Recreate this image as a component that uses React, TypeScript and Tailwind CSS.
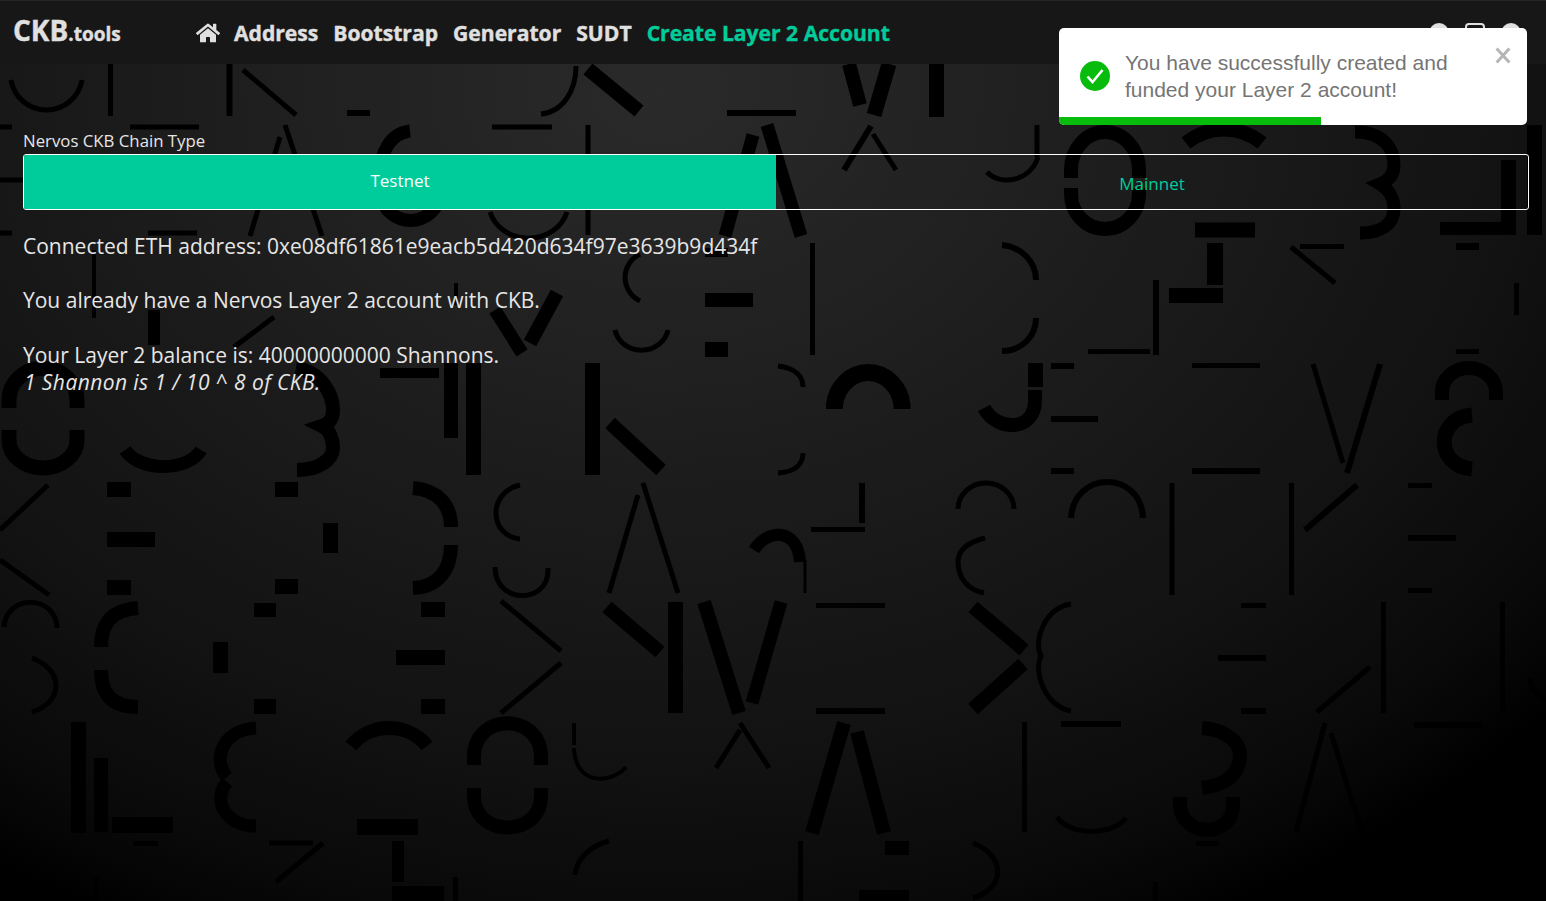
import React from "react";
import { FaHome } from "react-icons/fa";

type L = [number, number, number, number, number];
const lines: L[] = [
  [110.5,64,110.5,116,5],[229.5,64,229.5,116,6],[243,70,296,115,5],[347,113,370,113,6],[0,127,12,127,5],[130,127,199,127,5],
  [285,125,322,236,5],[280,137,250,236,5],[492,127,552,127,5],[0,180,23,180,5],[588,69,639,111,14],[727,113,796,113,6],[588,125,588,235,5],
  [767,125,801,236,13],[753,135,725,236,13],[849,64,860,105,14],[889,64,874,115,15],[936.5,64,936.5,117,15],[871,126,844,170,6],[873,134,896,170,5],
  [1037,125,1037,157,5],[1195,230,1255,230,15],[1440,228.5,1502,228.5,13],[1508.5,160,1508.5,235,15],[1534.5,125,1534.5,235,15],
  [148,233,197,233,5],[0,233,12,233,5],[94,250,94,318,4],[154,310,154,345,12],[274,317,234,347,5],[557,293,530,343,14],[495,310,522,353,13],
  [456,283,456,305,4],[705,300,753,300,14],[705,349.5,728,349.5,15],[705,252.5,728,252.5,9],
  [812.5,243,812.5,355,5],[1215,243,1215,285,16],[1169,295.5,1223,295.5,15],[1156,280,1156,355,6],[1088,351.5,1150,351.5,5],[1300,246.5,1344,246.5,5],[1291,247,1335,283,5],
  [1456,246.5,1479,246.5,7],[1456,351.5,1479,351.5,5],[1516.5,283,1516.5,315,5],
  [380,373,439,373,10],[451,363,451,438,14],[473.5,363,473.5,475,15],[592.5,363,592.5,475,15],[610,423,661,470,14],
  [1035.5,363,1035.5,387,15],[1051,366,1074,366,6],[1051,419,1098,419,6],[1051,471,1074,471,6],[1192,365.5,1260,365.5,5],[1192,471,1260,471,6],
  [1313,364,1343,463,5],[1380,364,1347,473,6],
  [0,530,48,485,5],[0,560,49,595,5],[107,489.5,131,489.5,15],[275,489.5,298,489.5,15],[107,539.5,155,539.5,15],[330.5,523,330.5,553,15],
  [107,587.5,131,587.5,15],[275,586.5,298,586.5,15],[638,495,609,593,5],[643,483,678,593,5],
  [862,483,862,523,6],[811,529.5,865,529.5,5],[1172,483,1172,595,5],[1291.5,483,1291.5,595,5],[1357,485,1305,530,6],[1408,485.5,1432,485.5,5],[1408,538,1456,538,6],[1408,590.5,1432,590.5,5],
  [805,560,805,593,3],
  [816,605.5,885,605.5,5],[816,711,885,711,6],[973,607,1024,650,14],[1023,664,973,709,14],[1241,605.5,1266,605.5,5],[1218,658,1266,658,6],[1241,711,1266,711,6],
  [1370,667,1317,712,5],[1383.5,602,1383.5,713,5],[1502.5,602,1502.5,713,5],
  [254,610,276,610,14],[254,706.5,276,706.5,15],[220.5,642,220.5,673,15],[421,609.5,445,609.5,15],[421,706.5,445,706.5,15],[396,657.5,445,657.5,15],
  [501,601,561,651,5],[561,663,501,713,5],[607,607,660,652,14],[675.5,602,675.5,713,15],[704,602,739,713,14],[781,602,752,703,13],
  [78.5,722,78.5,833,15],[101,758,101,832,14],[112,825,173,825,16],[357,827,418,827,16],[574,723,574,745,4],[740,723,769,768,5],[740,730,716,768,5],
  [844,723,812,833,14],[857,732,884,833,14],[1024.5,722,1024.5,832,5],[1061,724,1121,724,6],[1325,723,1296,832,5],[1331,733,1362,832,5],[1414,725,1482,725,6],[1414,830.5,1482,830.5,5],
  [800.5,841,800.5,901,5],[885,848,909,848,14],[1196,843.5,1219,843.5,5],[859,895.5,909,895.5,11],[1155.5,882,1155.5,901,5],
  [133,843.5,158,843.5,5],[269,843,313,843,5],[323,843,276,882,5],[398,841,398,882,12],[392,893.5,444,893.5,15],[455.5,877,455.5,901,5],[96,877,96,901,4],
];
const paths: [string, number][] = [
  ["M11 80A36 36 0 0 0 82 80",5],
  ["M410 131C392 133 380 150 379 178",13],
  ["M381 196A30 30 0 0 0 440 196",13],
  ["M541 114C562 112 576 92 576 66",5],
  ["M987 172C1000 186 1030 182 1038 157",5],
  ["M1071 178V170A34 38 0 0 1 1139 170V178",14],
  ["M1071 188V194A34 35 0 0 0 1139 194V188",14],
  ["M1186 143A60 60 0 0 1 1262 143",14],
  ["M1355 132C1385 132 1394 150 1394 165C1394 175 1388 181 1380 184C1390 190 1394 200 1394 208C1394 225 1380 233 1360 233",13],
  ["M490 212A40 36 0 0 0 567 212",5],
  ["M640 254A26 26 0 0 0 640 301",5],
  ["M615 330A27 25 0 0 0 668 330",5],
  ["M1002 245C1022 247 1036 262 1036 280",6],
  ["M1036 318C1036 336 1022 351 1002 351",6],
  ["M778 366C795 368 803 376 803 387",5],
  ["M803 453C803 464 795 472 778 473",5],
  ["M834.5 409V405A34 37 0 0 1 902 405V409",17],
  ["M1035 390V400C1035 432 997 432 984 408",14],
  ["M1442 400V392A27 24 0 0 1 1496 392V400",14],
  ["M1472 415C1435 418 1435 466 1472 469",15],
  ["M9 408V400A32 30 0 0 1 77 400V408",15],
  ["M9 430V440A34 28 0 0 0 77 440V430",15],
  ["M125 450C140 472 188 472 201 450",13],
  ["M296 368C322 372 333 395 333 410C333 420 328 424 322 426C330 430 333 440 333 448C333 460 318 470 297 470",14],
  ["M413 488C438 490 451 505 451 527",14],
  ["M451 545C451 570 438 587 413 588",14],
  ["M520 485C488 492 488 535 520 539",5],
  ["M495 567C495 605 550 605 548 568",5],
  ["M754 550C768 528 798 528 800 562",12],
  ["M958 509A28 26 0 0 1 1014 509",5],
  ["M1071 518C1074 470 1141 470 1143 518",6],
  ["M985 538C965 543 958 552 958 562C958 578 968 590 984 593",5],
  ["M1071 604C1045 608 1033 640 1041 656C1033 672 1045 706 1071 711",5],
  ["M1530 678C1530 688 1538 698 1546 700",4],
  ["M4 627C6 594 56 594 57 628",5],
  ["M32 658C64 670 64 702 32 712",5],
  ["M138 608C110 610 101 625 101 647",14],
  ["M101 670C101 692 110 707 138 707",14],
  ["M574 748C575 785 610 785 626 767",4],
  ["M256 728C222 730 212 760 227 777",13],
  ["M227 782C212 800 225 826 256 826",13],
  ["M351 746C370 722 408 722 427 746",14],
  ["M474 765V757C474 712 541 712 541 757V765",14],
  ["M474 788V796C474 838 541 838 541 796V788",14],
  ["M1202 728C1230 730 1240 745 1240 755C1240 775 1225 785 1202 788",14],
  ["M1180 797V805C1182 838 1233 838 1233 805V797",14],
  ["M1057 817C1070 836 1112 836 1126 818",5],
  ["M973 843C1006 856 1006 888 973 898",5],
  ["M609 841C590 846 577 858 575 875",5],
];

function Backdrop() {
  return (
    <svg className="absolute inset-0 h-full w-full" viewBox="0 0 1546 901" fill="none" stroke="#000" aria-hidden="true">
      {lines.map((l, i) => (
        <line key={i} x1={l[0]} y1={l[1]} x2={l[2]} y2={l[3]} strokeWidth={l[4]} />
      ))}
      {paths.map(([d, w], i) => (
        <path key={i} d={d} strokeWidth={w} />
      ))}
    </svg>
  );
}

export default function App() {
  return (
    <div className="relative h-[901px] w-[1546px] overflow-hidden bg-[radial-gradient(ellipse_1200px_930px_at_660px_90px,#2a2a2a_0%,#1c1c1c_42%,#121212_72%,#090909_90%,#000_100%)] font-['Open_Sans',sans-serif] text-[#e6e6e6]">
      <Backdrop />
      <header className="relative flex h-16 items-center border-t border-[#262626] bg-[#171717] pb-[2px] pl-[13px] pr-[25px]">
        <div className="mb-[3px] w-[183px] text-[19px] leading-none font-bold text-[#e0e0e0] [-webkit-text-stroke:0.4px_#e0e0e0]">
          <span className="text-[28px]">CKB</span>.tools
        </div>
        <nav className="mt-[3px] flex items-center gap-[15px] text-[21.1px] font-bold text-[#e0e0e0] [-webkit-text-stroke:0.4px]">
          <FaHome className="h-6 w-6" />
          <span className="-ml-[1px]">Address</span>
          <span>Bootstrap</span>
          <span>Generator</span>
          <span>SUDT</span>
          <span className="text-[#00cc9b]">Create Layer 2 Account</span>
        </nav>
        <div className="ml-auto flex items-center gap-4 pt-[2px]">
          <span className="h-5 w-5 rounded-full bg-[#e0e0e0]" />
          <span className="h-5 w-5 rounded-sm border-2 border-[#e0e0e0]" />
          <span className="h-5 w-5 rounded-full bg-[#e0e0e0]" />
        </div>
      </header>

      <main className="relative px-[23px] pt-[63px]">
        <div className="text-[16.8px] leading-[27px]">Nervos CKB Chain Type</div>
        <div className="flex h-14 w-[1506px] overflow-hidden rounded-[3px] border border-white text-[17px]">
          <div className="flex w-1/2 items-center justify-center bg-[#00cc9b] pb-[2px] text-white">Testnet</div>
          <div className="flex w-1/2 items-center justify-center pt-[3px] text-[#00cc9b]">Mainnet</div>
        </div>
        <div className="pt-[23px] text-[21px] leading-[27px]">
          <div>Connected ETH address: 0xe08df61861e9eacb5d420d634f97e3639b9d434f</div>
          <div className="mt-[27px]">You already have a Nervos Layer 2 account with CKB.</div>
          <div className="mt-[28px]">Your Layer 2 balance is: 40000000000 Shannons.</div>
          <div className="pl-[1px] italic tracking-[0.42px]">1 Shannon is 1 / 10 ^ 8 of CKB.</div>
        </div>
      </main>

      <div className="absolute left-[1059px] top-[28px] h-[97px] w-[468px] overflow-hidden rounded-[5px] bg-white font-['Liberation_Sans',sans-serif] text-[#757575]">
        <div className="flex items-center pl-[21px] pt-[21px]">
          <svg viewBox="0 0 30 30" className="h-[30px] w-[30px] shrink-0" aria-hidden="true">
            <circle cx="15" cy="15" r="15" fill="#07bc0c" />
            <path d="M7.5 15.5l5 5.5 10-12" fill="none" stroke="#fff" strokeWidth="2.6" />
          </svg>
          <div className="ml-[15px] text-[21px] leading-[27px]">
            You have successfully created and
            <br />
            funded your Layer 2 account!
          </div>
        </div>
        <svg viewBox="0 0 14 16" className="absolute right-[16px] top-[19px] h-[17px] w-[16px]" aria-hidden="true">
          <path d="M1 1.5L13 14.5M13 1.5L1 14.5" stroke="#b5b5b5" strokeWidth="2.8" fill="none" />
        </svg>
        <div className="absolute bottom-0 left-0 h-2 w-[262px] bg-[#07bc0c]" />
      </div>
    </div>
  );
}
